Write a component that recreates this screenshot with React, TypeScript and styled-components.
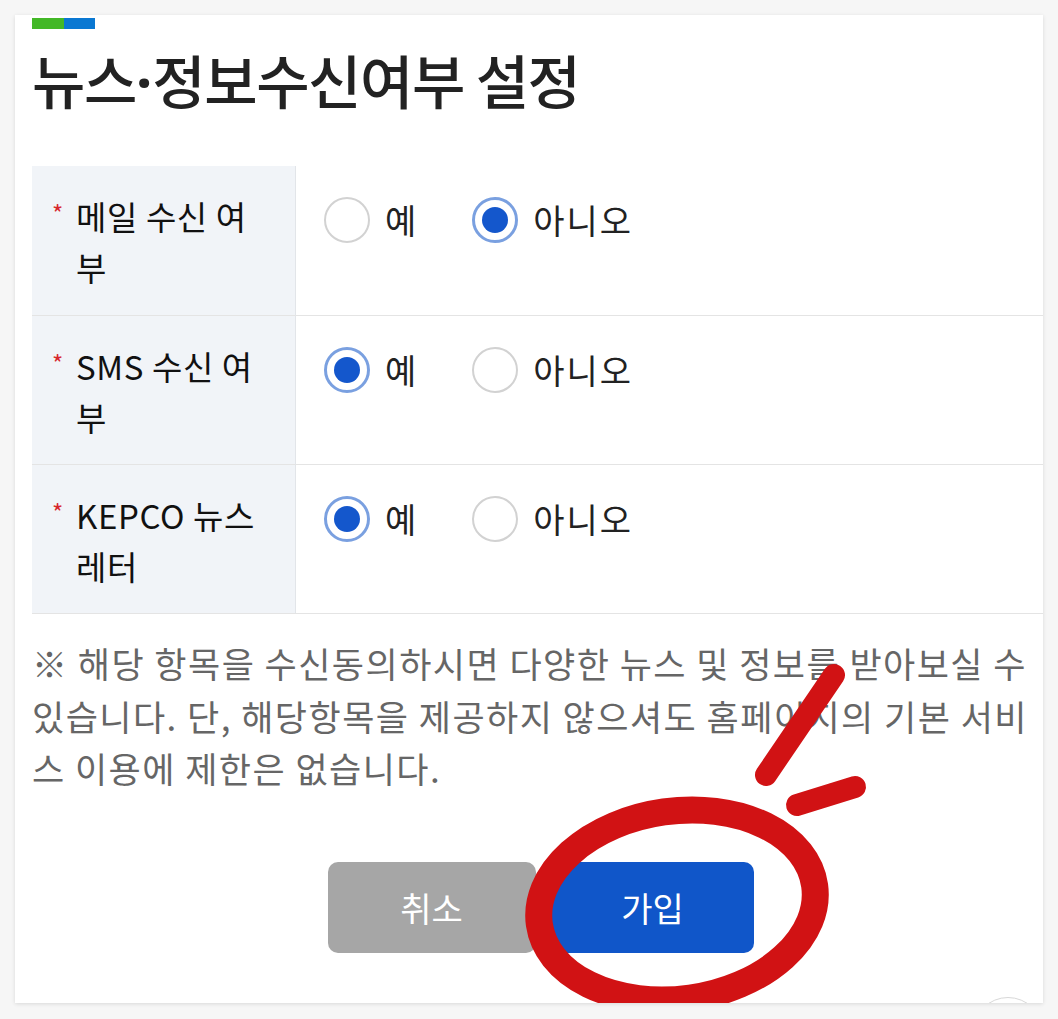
import React from "react";
import styled, { createGlobalStyle } from "styled-components";

const GlobalStyle = createGlobalStyle`
  html, body {
    margin: 0;
    padding: 0;
    background: #f6f6f6;
  }
  body {
    font-family: "Noto Sans CJK KR", "Noto Sans", sans-serif;
    color: #111;
  }
`;

const Page = styled.div`
  width: 1058px;
  height: 1019px;
  padding: 15px 0 0 15px;
  box-sizing: border-box;
  overflow: hidden;
`;

const Card = styled.div`
  position: relative;
  width: 1028px;
  height: 988px;
  background: #fff;
  box-shadow: 0 1px 4px rgba(0, 0, 0, 0.12);
  padding: 3px 0 0 17px;
  box-sizing: border-box;
  overflow: hidden;
`;

const Bar = styled.div`
  display: flex;
  width: 63px;
  height: 11px;
`;

const BarPart = styled.span<{ $color: string }>`
  flex: 1;
  background: ${(p) => p.$color};
`;

const Title = styled.h1`
  margin: 14px 0 51px;
  height: 72px;
  font-size: 58px;
  line-height: 72px;
  font-weight: 500;
  letter-spacing: -1.4px;
  color: #222;
`;

const Dot = styled.span`
  font-family: "Noto Sans", "DejaVu Sans", sans-serif;
  font-weight: 700;
  line-height: 0;
  letter-spacing: 0;
`;

const Table = styled.div`
  display: grid;
  grid-template-columns: 264px 1fr;
  border-bottom: 1px solid #e4e4e4;
`;

const LabelCell = styled.div<{ $first?: boolean }>`
  display: flex;
  align-items: flex-start;
  height: 149px;
  box-sizing: border-box;
  padding: 25px 20px 0 20px;
  background: #f1f4f8;
  border-right: 1px solid #e2e5e9;
  border-top: ${(p) => (p.$first ? "none" : "1px solid #e4e4e4")};
`;

const Star = styled.span`
  color: #d7262c;
  font-size: 24px;
  line-height: 44px;
  width: 24px;
  flex-shrink: 0;
`;

const LabelText = styled.span`
  font-size: 33px;
  line-height: 51px;
  letter-spacing: 0.6px;
  white-space: nowrap;
  color: #111;
`;

const ValueCell = styled.div<{ $first?: boolean }>`
  display: flex;
  align-items: flex-start;
  gap: 54px;
  height: 149px;
  box-sizing: border-box;
  padding: 31px 0 0 28px;
  border-top: ${(p) => (p.$first ? "none" : "1px solid #e4e4e4")};
`;

const Option = styled.label`
  display: flex;
  align-items: center;
  gap: 15px;
  font-size: 34px;
  line-height: 46px;
  letter-spacing: 2px;
  color: #222;
`;

const Radio = styled.span<{ $checked: boolean }>`
  position: relative;
  width: 46px;
  height: 46px;
  border-radius: 50%;
  box-sizing: border-box;
  background: #fff;
  border: ${(p) => (p.$checked ? "3px solid #7aa0e0" : "2px solid #d2d2d2")};
  &::after {
    content: "";
    display: ${(p) => (p.$checked ? "block" : "none")};
    position: absolute;
    left: 7px;
    top: 7px;
    width: 26px;
    height: 26px;
    border-radius: 50%;
    background: #1457cc;
  }
`;

const Notice = styled.div`
  margin: 23px 0 0 0;
  font-size: 35px;
  line-height: 52.5px;
  letter-spacing: 1.45px;
  color: #666;
`;

const NoticeLine = styled.div`
  white-space: nowrap;
`;

const Buttons = styled.div`
  display: flex;
  justify-content: center;
  gap: 16px;
  margin-top: 67px;
  padding-left: 6px;
`;

const Button = styled.button<{ $primary?: boolean }>`
  width: ${(p) => (p.$primary ? "202px" : "208px")};
  height: 91px;
  border: none;
  border-radius: 10px;
  background: ${(p) => (p.$primary ? "#1056c9" : "#a6a6a6")};
  color: #fff;
  font-family: "Noto Sans CJK KR", sans-serif;
  font-size: 34px;
  letter-spacing: 0;
`;

const Markup = styled.svg`
  position: absolute;
  left: 0;
  top: 0;
  width: 1028px;
  height: 988px;
  pointer-events: none;
`;

const FloatButton = styled.div`
  position: absolute;
  left: 958px;
  top: 982px;
  width: 68px;
  height: 68px;
  border-radius: 50%;
  border: 1px solid #d8d8d8;
  background: #fff;
`;

type Row = { lines: [string, string]; value: "yes" | "no" };

const rows: Row[] = [
  { lines: ["메일 수신 여", "부"], value: "no" },
  { lines: ["SMS 수신 여", "부"], value: "yes" },
  { lines: ["KEPCO 뉴스", "레터"], value: "yes" },
];

const notice = [
  "※ 해당 항목을 수신동의하시면 다양한 뉴스 및 정보를 받아보실 수",
  "있습니다. 단, 해당항목을 제공하지 않으셔도 홈페이지의 기본 서비",
  "스 이용에 제한은 없습니다.",
];

const App = () => {
  return (
    <>
      <GlobalStyle />
      <Page>
        <Card>
          <Bar>
            <BarPart $color="#43b827" />
            <BarPart $color="#0a78d2" />
          </Bar>
          <Title>
            뉴스<Dot>·</Dot>정보수신여부 설정
          </Title>
          <Table>
            {rows.map((row, idx) => (
              <React.Fragment key={row.lines[0]}>
                <LabelCell $first={idx === 0}>
                  <Star>*</Star>
                  <LabelText>
                    {row.lines[0]}
                    <br />
                    {row.lines[1]}
                  </LabelText>
                </LabelCell>
                <ValueCell $first={idx === 0}>
                  <Option>
                    <Radio $checked={row.value === "yes"} />
                    예
                  </Option>
                  <Option>
                    <Radio $checked={row.value === "no"} />
                    아니오
                  </Option>
                </ValueCell>
              </React.Fragment>
            ))}
          </Table>
          <Notice>
            {notice.map((line) => (
              <NoticeLine key={line}>{line}</NoticeLine>
            ))}
          </Notice>
          <Buttons>
            <Button>취소</Button>
            <Button $primary>가입</Button>
          </Buttons>
          <Markup viewBox="0 0 1028 988">
            <ellipse
              cx="662"
              cy="890"
              rx="139"
              ry="94"
              fill="none"
              stroke="#d11214"
              strokeWidth="27"
              transform="rotate(-8 662 890)"
            />
            <line
              x1="819"
              y1="660"
              x2="751"
              y2="760"
              stroke="#d11214"
              strokeWidth="22"
              strokeLinecap="round"
            />
            <line
              x1="782"
              y1="790"
              x2="840"
              y2="772"
              stroke="#d11214"
              strokeWidth="22"
              strokeLinecap="round"
            />
          </Markup>
          <FloatButton />
        </Card>
      </Page>
    </>
  );
};

export default App;
